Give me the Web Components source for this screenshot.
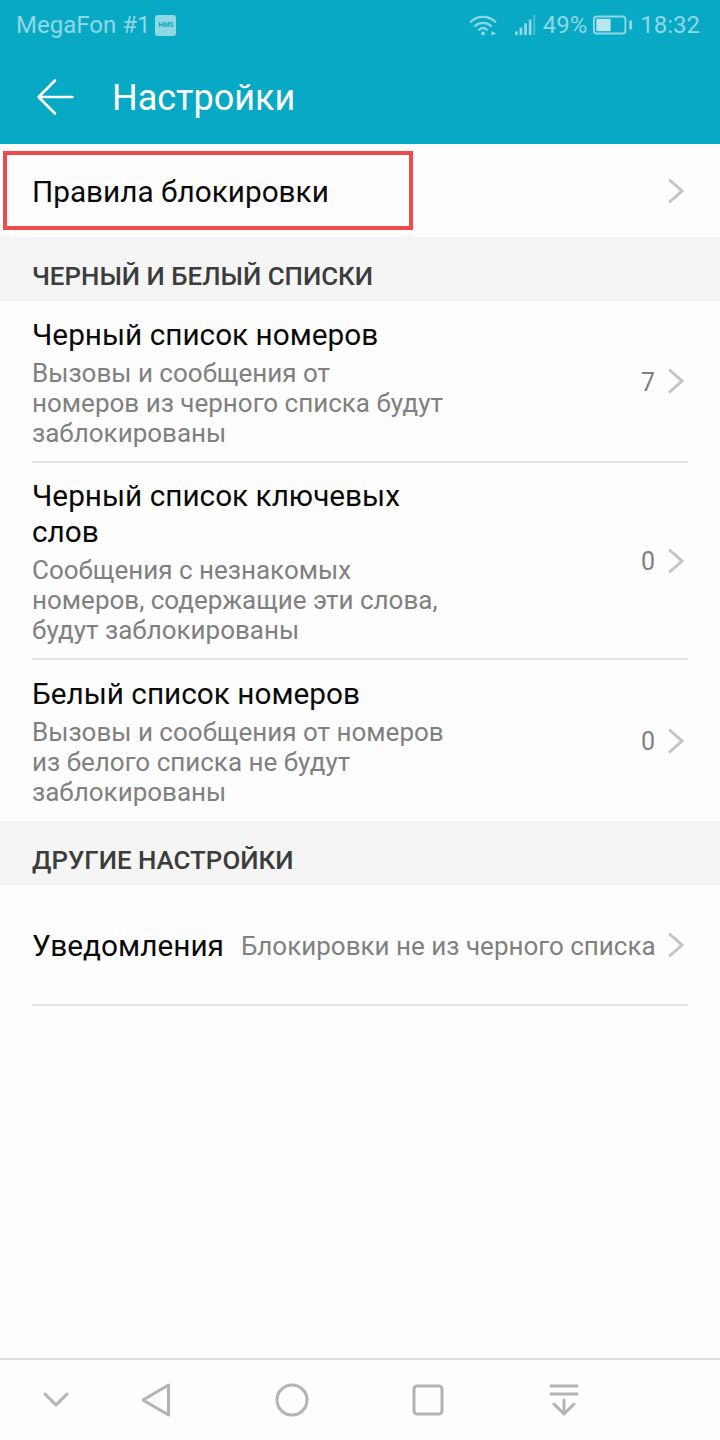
<!DOCTYPE html>
<html lang="ru">
<head>
<meta charset="utf-8">
<title>Настройки</title>
<style>
  html, body { margin: 0; height: 100%; }
  body {
    width: 720px;
    height: 1440px;
    display: flex;
    flex-direction: column;
    background: #fdfdfd;
    font-family: Roboto, "Noto Sans", sans-serif;
    overflow: hidden;
  }
  .spacer { flex: 1; }
</style>
</head>
<body>
<status-bar></status-bar>
<app-bar title="Настройки"></app-bar>
<list-row title="Правила блокировки" marked style="height:93px"></list-row>
<section-header>ЧЕРНЫЙ И БЕЛЫЙ СПИСКИ</section-header>
<list-row title="Черный список номеров" value="7" divider style="height:162px">Вызовы и сообщения от<br>номеров из черного списка будут<br>заблокированы</list-row>
<list-row title="Черный список ключевых слов" value="0" divider style="height:197px">Сообщения с незнакомых<br>номеров, содержащие эти слова,<br>будут заблокированы</list-row>
<list-row title="Белый список номеров" value="0" style="height:161px">Вызовы и сообщения от номеров<br>из белого списка не будут<br>заблокированы</list-row>
<section-header>ДРУГИЕ НАСТРОЙКИ</section-header>
<notify-row title="Уведомления" value="Блокировки не из черного списка"></notify-row>
<div class="spacer"></div>
<nav-bar></nav-bar>

<script>
// верхняя строка состояния
class StatusBar extends HTMLElement {
  constructor() {
    super();
    this.attachShadow({ mode: 'open' });
  }
  connectedCallback() {
    this.shadowRoot.innerHTML = `
      <style>
        :host {
          display: flex;
          align-items: center;
          height: 50px;
          padding: 0 20px 0 16px;
          background: #07a9c4;
          color: #8fd8e4;
          font-size: 24px;
        }
        .hms {
          width: 21px; height: 21px; margin-left: 5px; border-radius: 3px;
          background: #8fd8e4; color: #07a9c4;
          font-size: 7px; font-weight: 700; line-height: 21px; text-align: center;
        }
        .grow { flex: 1; }
        svg { display: block; }
        .pct { margin-left: 6px; }
        .time { margin-left: 7px; }
      </style>
      <span>MegaFon #1</span><span class="hms">HMS</span>
      <span class="grow"></span>
      <svg width="30" height="24" viewBox="0 0 32 24" fill="none" stroke="#8fd8e4" stroke-width="2.4" stroke-linecap="round" style="margin-right:16px">
        <path d="M2 8.500C9 1.500 21 1.500 28 8.500"/>
        <path d="M6.500 13C11 8.500 19 8.500 23.500 13"/>
        <path d="M11 17C13.500 14.800 16.500 14.800 19 17"/>
        <circle cx="15" cy="21" r="2" fill="#8fd8e4" stroke="none"/>
        <path d="M24 18.500l5 2.500-5 2.500z" fill="#8fd8e4" stroke="none"/>
      </svg>
      <svg width="22" height="24" viewBox="0 0 24 24" fill="#8fd8e4">
        <rect x="0" y="19" width="3" height="4"/>
        <rect x="5" y="15" width="3" height="8"/>
        <rect x="10" y="10" width="3" height="13"/>
        <rect x="15" y="6" width="3" height="17"/>
        <rect x="20" y="1" width="2" height="22" opacity=".55"/>
      </svg>
      <span class="pct">49%</span>
      <svg width="40" height="22" viewBox="0 0 42 22" fill="none" style="margin-left:6px">
        <rect x="1" y="2" width="33" height="18" rx="3" stroke="#8fd8e4" stroke-width="2"/>
        <rect x="3.500" y="4.500" width="15" height="13" fill="#b9e6ee"/>
        <rect x="38" y="6" width="3" height="10" rx="1.500" fill="#8fd8e4"/>
      </svg>
      <span class="time">18:32</span>
    `;
  }
}

// заголовок со стрелкой назад
class AppBar extends HTMLElement {
  constructor() {
    super();
    this.attachShadow({ mode: 'open' });
  }
  connectedCallback() {
    this.shadowRoot.innerHTML = `
      <style>
        :host {
          display: flex;
          align-items: center;
          height: 94px;
          padding: 0 0 0 36px;
          box-sizing: border-box;
          background: #07a9c4;
          color: #fff;
          font-size: 36px;
        }
        svg { display: block; margin-right: 38px; }
        span { position: relative; top: 1px; }
      </style>
      <svg width="38" height="38" viewBox="0 0 38 38" fill="none" stroke="#fff" stroke-width="2.600" stroke-linecap="round" stroke-linejoin="round">
        <path d="M36.500 19H2.500M19 2.500L2.500 19 19 35.500"/>
      </svg>
      <span>${this.getAttribute('title') || ''}</span>
    `;
  }
}

class SectionHeader extends HTMLElement {
  constructor() {
    super();
    this.attachShadow({ mode: 'open' });
  }
  connectedCallback() {
    this.shadowRoot.innerHTML = `
      <style>
        :host {
          display: flex;
          align-items: center;
          height: 64px;
          box-sizing: border-box;
          padding: 13px 0 0 32px;
          background: #f5f5f5;
          color: #3c3c3c;
          font-size: 25.900px;
          font-weight: 500;
        }
      </style>
      <slot></slot>
    `;
  }
}

const chevron = `<svg class="chev" width="18" height="26" viewBox="0 0 18 26" fill="none" stroke="#c4c4c4" stroke-width="3"><path d="M2 1.500L15 13 2 24.500"/></svg>`;

// строка списка: заголовок, описание в slot, значение и шеврон
class ListRow extends HTMLElement {
  constructor() {
    super();
    this.attachShadow({ mode: 'open' });
  }
  connectedCallback() {
    const title = this.getAttribute('title') || '';
    const value = this.getAttribute('value') || '';
    this.shadowRoot.innerHTML = `
      <style>
        :host {
          display: block;
          position: relative;
          padding: 0 32px;
          box-sizing: border-box;
          background: #fdfdfd;
        }
        .inner {
          height: 100%;
          box-sizing: border-box;
          display: flex;
          align-items: center;
        }
        :host([divider]) .inner { border-bottom: 2px solid #e2e2e2; }
        .text { flex: 1; min-width: 0; padding-top: 2px; }
        .title { width: 400px; font-size: 29.750px; line-height: 36px; color: #0a0a0a; }
        .sub { font-size: 26px; line-height: 30px; color: #808080; margin-top: 5px; white-space: nowrap; }
        .value { font-size: 25px; color: #808080; margin-right: 12px; position: relative; top: 1px; }
        .chev { display: block; margin-right: 3px; }
        .mark {
          position: absolute;
          left: 3px; top: 7px;
          width: 410px; height: 79px;
          box-sizing: border-box;
          border: 4px solid #ef4a4a;
        }
      </style>
      <div class="inner">
        <div class="text">
          <div class="title">${title}</div>
          ${this.childNodes.length ? '<div class="sub"><slot></slot></div>' : ''}
        </div>
        ${value ? `<span class="value">${value}</span>` : ''}
        ${chevron}
      </div>
      ${this.hasAttribute('marked') ? '<div class="mark"></div>' : ''}
    `;
  }
}

class NotifyRow extends HTMLElement {
  constructor() {
    super();
    this.attachShadow({ mode: 'open' });
  }
  connectedCallback() {
    this.shadowRoot.innerHTML = `
      <style>
        :host { display: block; padding: 0 32px; background: #fdfdfd; }
        .inner {
          display: flex;
          align-items: center;
          height: 121px;
          box-sizing: border-box;
          border-bottom: 2px solid #e2e2e2;
        }
        .title { font-size: 29.800px; color: #0a0a0a; position: relative; top: 1px; }
        .value { flex: 1; margin-left: 17px; font-size: 26px; color: #808080; white-space: nowrap; position: relative; top: 1px; }
        .chev { display: block; margin-right: 3px; }
      </style>
      <div class="inner">
        <span class="title">${this.getAttribute('title')}</span>
        <span class="value">${this.getAttribute('value')}</span>
        ${chevron}
      </div>
    `;
  }
}

// нижняя панель навигации
class NavBar extends HTMLElement {
  constructor() {
    super();
    this.attachShadow({ mode: 'open' });
  }
  connectedCallback() {
    this.shadowRoot.innerHTML = `
      <style>
        :host {
          display: grid;
          grid-template-columns: 112px 88px 184px 88px 184px;
          align-items: center;
          justify-items: center;
          height: 82px;
          box-sizing: border-box;
          border-top: 2px solid #e0e0e0;
          background: #fdfdfd;
        }
        svg { display: block; fill: none; stroke: #b3b3b3; stroke-width: 3; stroke-linejoin: round; stroke-linecap: round; }
      </style>
      <svg width="26" height="16" viewBox="0 0 26 16"><path d="M2 2l11 11L24 2"/></svg>
      <svg width="30" height="34" viewBox="0 0 30 34"><path d="M27.500 2L2 17l25.500 15z"/></svg>
      <svg width="34" height="34" viewBox="0 0 34 34"><circle cx="17" cy="17" r="15"/></svg>
      <svg width="32" height="32" viewBox="0 0 32 32"><rect x="2" y="2" width="28" height="28" rx="3"/></svg>
      <svg width="30" height="32" viewBox="0 0 30 32"><path d="M2 2h26M2 10h26M15 16v14M5 20l10 10 10-10"/></svg>
    `;
  }
}

customElements.define('status-bar', StatusBar);
customElements.define('app-bar', AppBar);
customElements.define('section-header', SectionHeader);
customElements.define('list-row', ListRow);
customElements.define('notify-row', NotifyRow);
customElements.define('nav-bar', NavBar);
</script>
</body>
</html>
